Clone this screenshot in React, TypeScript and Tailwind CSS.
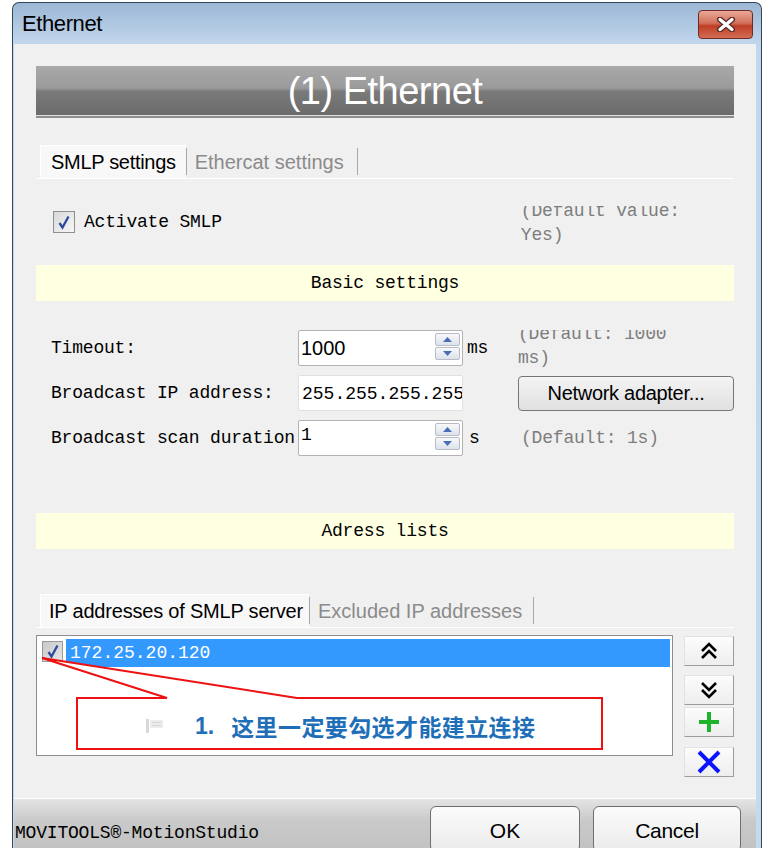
import React from 'react';

const mono = "font-['Liberation_Mono',monospace] text-[18px] tracking-[-0.2px]";
const sans = "font-['Liberation_Sans',Arial,sans-serif]";

function CheckBox() {
  return (
    <div className="w-[22px] h-[22px] border border-[#8e8f8f] bg-gradient-to-br from-[#d8d8d8] to-[#f7f7f7] flex items-center justify-center">
      <svg width="14" height="15" viewBox="0 0 14 15">
        <path d="M2.5 8 L5.5 12.5 L11.5 1.5" fill="none" stroke="#2c4a9e" strokeWidth="2.3" />
      </svg>
    </div>
  );
}

function Spin() {
  const btn = 'w-[25px] h-[13px] rounded-[2px] border border-[#b7bcc6] bg-gradient-to-b from-[#f8f8f8] to-[#dce2ec] flex items-center justify-center';
  return (
    <div className="flex flex-col gap-[1px] pt-[2px] pr-[2px]">
      <div className={btn}>
        <svg width="9" height="5" viewBox="0 0 9 5"><path d="M0 5 L4.5 0 L9 5Z" fill="#4a6db8" /></svg>
      </div>
      <div className={btn}>
        <svg width="9" height="5" viewBox="0 0 9 5"><path d="M0 0 L4.5 5 L9 0Z" fill="#4a6db8" /></svg>
      </div>
    </div>
  );
}

function Band({ label }: { label: string }) {
  return (
    <div className={`h-[36px] bg-[#ffffe1] flex items-center justify-center text-black ${mono}`}>{label}</div>
  );
}

function SideButton({ children }: { children: React.ReactNode }) {
  return (
    <div className="w-[50px] h-[30px] bg-gradient-to-b from-[#fcfcfc] to-[#eeeeee] border border-[#e2e2e2] border-r-[#9c9c9c] border-b-[#9c9c9c] flex items-center justify-center">
      {children}
    </div>
  );
}

export default function App() {
  return (
    <div className="relative w-[776px] h-[858px] bg-white overflow-hidden">
      <div className="ml-[12px] mt-[2px] w-[750px] h-[846px] rounded-t-[7px] border border-b-0 border-[#34465c] bg-[linear-gradient(#9cb7d5,#c2d7ed_42px,#c6daef)] flex flex-col overflow-hidden">
        {/* title bar */}
        <div className="h-[41px] flex items-start justify-between pl-[9px] pr-[8px]">
          <span className={`${sans} text-[22px] text-black leading-[41px] tracking-[-0.4px]`}>Ethernet</span>
          <div className="mt-[7px] w-[55px] h-[29px] rounded-[4px] border border-[#6e2b24] bg-[linear-gradient(#e9a896,#d2705b_45%,#bf3e26_55%,#d46c55)] flex items-center justify-center">
            <svg width="20" height="15" viewBox="0 0 20 15">
              <path d="M4 2.5 L16 12.5 M16 2.5 L4 12.5" stroke="#5b2a26" strokeWidth="6" strokeLinecap="round" />
              <path d="M4 2.5 L16 12.5 M16 2.5 L4 12.5" stroke="#ffffff" strokeWidth="3.4" strokeLinecap="round" />
            </svg>
          </div>
        </div>

        {/* client area */}
        <div className="flex-1 ml-[1px] mr-[5px] bg-[#f0f0f0] flex flex-col">
          <div className="px-[22px] flex flex-col">
            {/* banner */}
            <div className="mt-[22px] h-[49px] bg-[linear-gradient(#a9a9a9,#9a9a9a_45%,#7a7a7a_52%,#6b6b6b)] flex items-center justify-center">
              <span className={`${sans} text-[38px] text-white leading-none tracking-[-0.5px]`}>(1) Ethernet</span>
            </div>
            <div className="h-[1px] bg-[#dedede]" />
            <div className="h-[2px] bg-[#8d8d8d]" />

            {/* tabs */}
            <div className={`mt-[27px] h-[34px] flex items-stretch border-b border-white ${sans} text-[20px]`}>
              <div className="ml-[4px] pl-[10px] pr-[10px] bg-[#f8f8f8] border-t border-l border-white flex items-center text-black tracking-[-0.3px]">SMLP settings</div>
              <div className="w-[1px] bg-[#a8a8a8] my-[3px]" />
              <div className="pl-[8px] pr-[13px] flex items-center text-[#8b8b8b]">Ethercat settings</div>
              <div className="w-[1px] bg-[#a8a8a8] my-[3px]" />
            </div>

            {/* activate */}
            <div className="mt-[27px] h-[30px] flex items-start">
              <div className="ml-[17px] mt-[5px]"><CheckBox /></div>
              <span className={`ml-[9px] mt-[5px] leading-[22px] text-black ${mono}`}>Activate SMLP</span>
              <div className="ml-[299px] w-[175px] h-[30px] [clip-path:inset(0_-20px_-40px_0)]">
                <div className={`-mt-[7px] leading-[24px] text-[#7d7d7d] ${mono}`}>(Default value: Yes)</div>
              </div>
            </div>

            <div className="mt-[29px]"><Band label="Basic settings" /></div>

            {/* fields */}
            <div className="mt-[29px] flex flex-col gap-[9px]">
              <div className="h-[36px] flex items-center">
                <div className={`w-[262px] pl-[15px] text-black ${mono}`}>Timeout:</div>
                <div className="w-[165px] h-[36px] bg-white border border-[#b3b3b3] rounded-[2px] flex">
                  <span className={`flex-1 pl-[2px] pt-[2px] ${sans} text-[20px] text-black`}>1000</span>
                  <Spin />
                </div>
                <div className={`w-[55px] pl-[4px] text-black ${mono}`}>ms</div>
                <div className="w-[165px] h-[36px] self-start [clip-path:inset(0_-20px_-40px_0)]">
                  <div className={`-mt-[8px] leading-[24px] text-[#7d7d7d] ${mono}`}>(Default: 1000 ms)</div>
                </div>
              </div>
              <div className="h-[36px] flex items-center">
                <div className={`w-[262px] pl-[15px] text-black ${mono}`}>Broadcast IP address:</div>
                <div className="w-[165px] h-[36px] bg-white border border-[#e0e0e0] rounded-[2px] overflow-hidden">
                  <div className={`pl-[3px] pt-[5px] whitespace-nowrap text-black ${mono} tracking-[0px]`}>255.255.255.255</div>
                </div>
                <div className="w-[55px]" />
                <div className={`w-[216px] h-[35px] rounded-[4px] border border-[#767676] bg-gradient-to-b from-[#f4f4f4] to-[#e0e0e0] flex items-center justify-center ${sans} text-[20px] tracking-[-0.3px] text-black`}>Network adapter...</div>
              </div>
              <div className="h-[36px] flex items-center">
                <div className={`w-[262px] pl-[15px] text-black whitespace-nowrap ${mono}`}>Broadcast scan duration</div>
                <div className="w-[165px] h-[36px] bg-white border border-[#b3b3b3] rounded-[2px] flex">
                  <span className={`flex-1 pl-[2px] pt-[1px] text-black ${mono}`}>1</span>
                  <Spin />
                </div>
                <div className={`w-[58px] pl-[6px] text-black ${mono}`}>s</div>
                <div className={`text-[#7d7d7d] ${mono}`}>(Default: 1s)</div>
              </div>
            </div>

            <div className="mt-[57px]"><Band label="Adress lists" /></div>

            {/* second tabs */}
            <div className={`mt-[45px] h-[34px] flex items-stretch border-b border-white ${sans} text-[20px]`}>
              <div className="ml-[4px] pl-[8px] pr-[6px] bg-[#f8f8f8] border-t border-l border-white flex items-center text-black tracking-[-0.2px]">IP addresses of SMLP server</div>
              <div className="w-[1px] bg-[#a8a8a8] my-[3px]" />
              <div className="pl-[8px] pr-[11px] flex items-center text-[#8b8b8b]">Excluded IP addresses</div>
              <div className="w-[1px] bg-[#a8a8a8] my-[3px]" />
            </div>

            {/* list + side buttons */}
            <div className="mt-[7px] flex gap-[11px]">
              <div className="w-[637px] h-[121px] bg-white border border-[#8a8d93] pt-[3px] pl-[3px] pr-[2px]">
                <div className="flex h-[28px]">
                  <div className="pt-[2px] pl-[2px] w-[26px]">
                    <div className="w-[21px] h-[21px] border border-[#9a9a9a] bg-gradient-to-br from-[#c9c9c9] to-[#e6e6e6] flex items-center justify-center">
                      <svg width="14" height="15" viewBox="0 0 14 15">
                        <path d="M2.5 8 L5.5 12.5 L11.5 1.5" fill="none" stroke="#2c4a9e" strokeWidth="2.3" />
                      </svg>
                    </div>
                  </div>
                  <div className={`flex-1 bg-[#3399ff] text-white pl-[4px] leading-[28px] ${mono} tracking-[0px]`}>172.25.20.120</div>
                </div>
              </div>
              <div className="flex flex-col pt-[1px]">
                <SideButton>
                  <svg width="22" height="22" viewBox="0 0 22 22">
                    <path d="M4 11 L11 4 L18 11 M4 18 L11 11 L18 18" fill="none" stroke="#000" strokeWidth="2.6" />
                  </svg>
                </SideButton>
                <div className="h-[9px]" />
                <SideButton>
                  <svg width="22" height="22" viewBox="0 0 22 22">
                    <path d="M4 4 L11 11 L18 4 M4 11 L11 18 L18 11" fill="none" stroke="#000" strokeWidth="2.6" />
                  </svg>
                </SideButton>
                <div className="h-[2px]" />
                <SideButton>
                  <svg width="24" height="24" viewBox="0 0 24 24">
                    <path d="M12 2 V22 M2 12 H22" stroke="#1db32a" strokeWidth="4" />
                  </svg>
                </SideButton>
                <div className="h-[10px]" />
                <SideButton>
                  <svg width="26" height="24" viewBox="0 0 26 24">
                    <path d="M3 2 L23 22 M23 2 L3 22" stroke="#0a14ff" strokeWidth="4" />
                  </svg>
                </SideButton>
              </div>
            </div>
          </div>

          {/* footer */}
          <div className="mt-auto h-[1px] bg-white" />
          <div className="h-[49px] bg-[linear-gradient(#e4e4e4,#c9c9c9_45%,#c3c3c3)] flex">
            <span className={`self-end pb-[1px] pl-[1px] text-black ${mono}`}>MOVITOOLS®-MotionStudio</span>
            <div className="ml-auto mr-[15px] mt-[7px] flex gap-[13px]">
              <div className={`w-[150px] h-[46px] rounded-[6px] border border-[#6f6f6f] bg-gradient-to-b from-[#fbfbfb] to-[#ebebeb] flex justify-center pt-[8px] ${sans} text-[21px] text-black`}>OK</div>
              <div className={`w-[148px] h-[46px] rounded-[6px] border border-[#6f6f6f] bg-gradient-to-b from-[#fbfbfb] to-[#ebebeb] flex justify-center pt-[8px] ${sans} text-[21px] tracking-[-0.3px] text-black`}>Cancel</div>
            </div>
          </div>
        </div>
      </div>

      {/* annotation callout */}
      <svg className="absolute left-0 top-0 pointer-events-none" width="776" height="858">
        <polygon points="77,698 167,698 42,658 297,698 602,698 602,749 77,749" fill="#ffffff" stroke="#ee1111" strokeWidth="2" />
      </svg>
      <div className="absolute left-[77px] top-[699px] w-[525px] h-[49px] flex items-center">
        <svg className="ml-[68px] mt-[4px]" width="20" height="16" viewBox="0 0 20 16">
          <rect x="1" y="1" width="3" height="14" fill="#d8d8d8" />
          <rect x="5" y="2" width="13" height="8" fill="#ececec" />
          <rect x="7" y="4" width="9" height="1" fill="#d4d4d4" />
          <rect x="7" y="7" width="9" height="1" fill="#d4d4d4" />
        </svg>
        <span className="ml-[30px] mt-[5px] font-['Liberation_Sans','Noto_Sans_CJK_SC',sans-serif] font-bold text-[23px] text-[#1f6fb8]">1.</span>
        <span className="ml-[17px] mt-[5px] font-['Noto_Sans_CJK_SC',sans-serif] font-bold text-[23px] tracking-[0.4px] text-[#1f6fb8]">这里一定要勾选才能建立连接</span>
      </div>
    </div>
  );
}
